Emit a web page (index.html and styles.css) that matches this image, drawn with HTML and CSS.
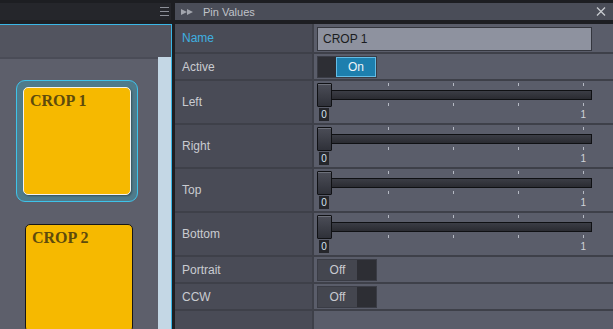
FILE: index.html
```html
<!DOCTYPE html>
<html lang="en">
<head>
    <meta charset="UTF-8">
    <title>Pin Values</title>
    <link rel="stylesheet" href="styles.css">
</head>
<body>
    <div class="app">
        <section class="side">
            <div class="side-head">
                <span class="menu"><i></i><i></i><i></i></span>
            </div>
            <div class="side-body">
                <div class="side-tools"></div>
                <div class="side-list">
                    <div class="crops">
                        <div class="crop-ring">
                            <div class="crop">CROP 1</div>
                        </div>
                        <div class="crop crop-plain">CROP 2</div>
                    </div>
                    <div class="scrollbar"></div>
                </div>
            </div>
        </section>

        <section class="main">
            <div class="main-head">
                <svg class="play" width="12" height="6" viewBox="0 0 12 6">
                    <polygon points="0,0 6,3 0,6"/>
                    <polygon points="6,0 12,3 6,6"/>
                </svg>
                <span class="title">Pin Values</span>
                <svg class="close" width="10" height="9" viewBox="0 0 10 9">
                    <path d="M1 0.5 L9 8.5 M9 0.5 L1 8.5"/>
                </svg>
            </div>

            <div class="props">
                <div class="row row-name">
                    <div class="label label-active">Name</div>
                    <div class="value"><div class="field">CROP 1</div></div>
                </div>
                <div class="row row-toggle">
                    <div class="label">Active</div>
                    <div class="value">
                        <div class="toggle"><span class="knob"></span><span class="state on">On</span></div>
                    </div>
                </div>
                <div class="row row-slider">
                    <div class="label">Left</div>
                    <div class="value value-slider">
                        <div class="slider">
                            <div class="ticks"><i></i><i></i><i></i><i></i><i></i></div>
                            <div class="track"></div>
                            <div class="ticks"><i></i><i></i><i></i><i></i><i></i></div>
                            <div class="thumb"></div>
                        </div>
                        <div class="scale"><span class="min">0</span><span class="max">1</span></div>
                    </div>
                </div>
                <div class="row row-slider">
                    <div class="label">Right</div>
                    <div class="value value-slider">
                        <div class="slider">
                            <div class="ticks"><i></i><i></i><i></i><i></i><i></i></div>
                            <div class="track"></div>
                            <div class="ticks"><i></i><i></i><i></i><i></i><i></i></div>
                            <div class="thumb"></div>
                        </div>
                        <div class="scale"><span class="min">0</span><span class="max">1</span></div>
                    </div>
                </div>
                <div class="row row-slider">
                    <div class="label">Top</div>
                    <div class="value value-slider">
                        <div class="slider">
                            <div class="ticks"><i></i><i></i><i></i><i></i><i></i></div>
                            <div class="track"></div>
                            <div class="ticks"><i></i><i></i><i></i><i></i><i></i></div>
                            <div class="thumb"></div>
                        </div>
                        <div class="scale"><span class="min">0</span><span class="max">1</span></div>
                    </div>
                </div>
                <div class="row row-slider">
                    <div class="label">Bottom</div>
                    <div class="value value-slider">
                        <div class="slider">
                            <div class="ticks"><i></i><i></i><i></i><i></i><i></i></div>
                            <div class="track"></div>
                            <div class="ticks"><i></i><i></i><i></i><i></i><i></i></div>
                            <div class="thumb"></div>
                        </div>
                        <div class="scale"><span class="min">0</span><span class="max">1</span></div>
                    </div>
                </div>
                <div class="row row-toggle">
                    <div class="label">Portrait</div>
                    <div class="value">
                        <div class="toggle"><span class="state off">Off</span><span class="knob"></span></div>
                    </div>
                </div>
                <div class="row row-toggle">
                    <div class="label">CCW</div>
                    <div class="value">
                        <div class="toggle"><span class="state off">Off</span><span class="knob"></span></div>
                    </div>
                </div>
                <div class="row row-filler">
                    <div class="label"></div>
                    <div class="value"></div>
                </div>
            </div>
        </section>
    </div>
</body>
</html>
```

FILE: styles.css
```css
body {
    margin: 0;
    height: 329px;
    overflow: hidden;
    background: #1d1e22;
    font-family: "Liberation Sans", Arial, sans-serif;
    font-size: 12px;
}
.app {
    display: grid;
    grid-template-columns: 172px 438px;
    column-gap: 3px;
    height: 329px;
    padding-top: 3px;
    box-sizing: border-box;
}

/* left panel */
.side {
    display: flex;
    flex-direction: column;
    min-height: 0;
}
.side-head {
    height: 17px;
    margin-right: 1px;
    background: #25262b;
    display: flex;
    justify-content: flex-end;
    align-items: center;
    padding-right: 2px;
}
.menu {
    display: flex;
    flex-direction: column;
    gap: 3px;
}
.menu i {
    display: block;
    width: 9px;
    height: 1px;
    background: #8d9099;
}
.side-body {
    flex: 1;
    min-height: 0;
    margin-top: 4px;
    border-top: 1px solid #3ab6e6;
    border-right: 1px solid #3ab6e6;
    background: #5d5f6b;
    display: flex;
    flex-direction: column;
}
.side-tools {
    height: 32px;
    background: #52545f;
}
.side-list {
    flex: 1;
    min-height: 0;
    display: flex;
    overflow: hidden;
}
.crops {
    flex: 1;
    padding-top: 21px;
    border-top: 2px solid #4a4c57;
}
.scrollbar {
    width: 13px;
    background: #c4d7e5;
}
.crop-ring {
    width: 108px;
    margin-left: 16px;
    padding: 6px;
    border: 1px solid #3ec3ea;
    border-radius: 9px;
    background: #4f7b8b;
}
.crop {
    width: 108px;
    height: 108px;
    box-sizing: border-box;
    padding: 4px 6px;
    border: 1px solid #f2f2f2;
    border-radius: 5px;
    background: #f6b900;
    color: #5e4b0c;
    font-family: "Liberation Serif", "Times New Roman", serif;
    font-weight: bold;
    font-size: 16px;
    box-shadow: 1px 1px 2px rgba(0, 0, 0, 0.35);
}
.crop-plain {
    margin: 22px 0 0 25px;
    border-color: #161616;
    box-shadow: none;
}

/* right panel */
.main {
    display: flex;
    flex-direction: column;
    min-width: 0;
}
.main-head {
    height: 17px;
    background: #4a4d58;
    display: flex;
    align-items: center;
    padding: 0 7px 0 6px;
    color: #c0c3c9;
    font-size: 11px;
}
.play polygon {
    fill: #a2a5ad;
}
.title {
    margin-left: 10px;
    flex: 1;
}
.close path {
    stroke: #c8cbd0;
    stroke-width: 1.3;
    fill: none;
}
.props {
    flex: 1;
    margin-top: 4px;
    background: #5a5d6a;
    display: flex;
    flex-direction: column;
}
.row {
    display: grid;
    grid-template-columns: 139px 1fr;
    border-bottom: 2px solid #3e4049;
    box-sizing: border-box;
}
.row-name { height: 30px; }
.row-toggle { height: 27px; }
.row-slider { height: 44px; }
.row-filler {
    flex: 1;
    border-bottom: 0;
}
.label {
    background: #494b56;
    border-right: 2px solid #3e4049;
    display: flex;
    align-items: center;
    padding-left: 7px;
    color: #c9cbd1;
}
.label-active {
    color: #3fb0e0;
}
.value {
    display: flex;
    align-items: flex-start;
    padding-left: 3px;
    padding-top: 2px;
}
.row-name .value {
    padding-top: 3px;
}
.field {
    width: 275px;
    height: 24px;
    box-sizing: border-box;
    border: 1px solid #34363e;
    background: #8e929f;
    color: #1b1c20;
    padding-left: 5px;
    display: flex;
    align-items: center;
}

/* toggles */
.toggle {
    display: flex;
    width: 60px;
    height: 22px;
    box-sizing: border-box;
    border: 1px solid #3a3c45;
    background: #2d2e34;
}
.knob {
    flex: 1;
}
.state {
    display: flex;
    align-items: center;
    justify-content: center;
}
.state.on {
    width: 40px;
    box-sizing: border-box;
    border: 1px solid #64bde6;
    background: #1d7fae;
    color: #eef4f8;
}
.state.off {
    width: 39px;
    background: #44464f;
    color: #c8cad0;
}

/* sliders */
.value-slider {
    flex-direction: column;
}
.slider {
    position: relative;
    width: 275px;
    height: 24px;
}
.ticks {
    display: flex;
    justify-content: space-between;
    height: 3px;
    padding: 0 8px 0 6px;
}
.ticks i {
    display: block;
    width: 1px;
    background: #b5b9c3;
}
.track {
    height: 10px;
    box-sizing: border-box;
    margin: 4px 0 3px;
    border: 1px solid #0f1013;
    background: linear-gradient(#3b3d45, #2a2b31);
}
.thumb {
    position: absolute;
    left: 0;
    top: 0;
    width: 15px;
    height: 24px;
    box-sizing: border-box;
    border: 1px solid #101114;
    border-radius: 1px;
    background: linear-gradient(#4b4d57, #2f3139);
    box-shadow: inset 0 1px 0 #6d707a;
}
.scale {
    display: flex;
    justify-content: space-between;
    width: 275px;
    margin-top: 1px;
    font-size: 10px;
    line-height: 13px;
}
.min {
    width: 10px;
    height: 13px;
    margin-left: 2px;
    background: #25262b;
    color: #d5e3f0;
    text-align: center;
}
.max {
    margin-right: 6px;
    color: #d0d3d9;
}
```
